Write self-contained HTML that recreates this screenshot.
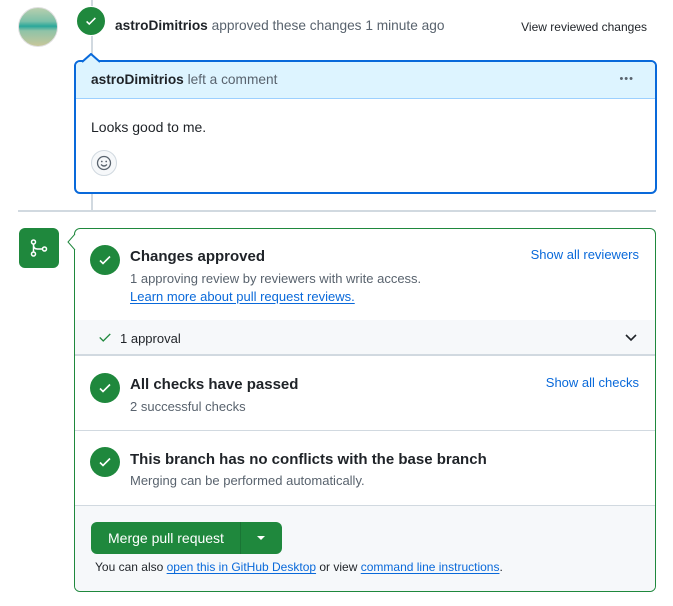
<!DOCTYPE html>
<html><head><meta charset="utf-8"><style>
*{box-sizing:border-box;margin:0;padding:0}
body{width:673px;height:606px;background:#fff;font-family:"Liberation Sans",sans-serif;color:#1f2328;position:relative;overflow:hidden}
.a{position:absolute;white-space:nowrap}
.muted{color:#59636e}
.link{color:#0969da}
.ul{text-decoration:underline;text-underline-offset:2px}
.chk{position:absolute;width:30px;height:30px;border-radius:50%;background:#1f883d}
.chk svg{position:absolute;left:7px;top:7px}
</style></head><body>
<div class="a" style="left:91px;top:0;width:2px;height:211px;background:#d1d9e0"></div>
<div class="a" style="left:18px;top:7px;width:40px;height:40px;border-radius:50%;background:linear-gradient(180deg,#b9cfae 0%,#7cc0a8 35%,#2aa79a 48%,#8fc3a8 60%,#c7c79a 100%);border:1px solid #e0e0e0"></div>
<div class="a" style="left:76px;top:6px;width:30px;height:30px;border-radius:50%;background:#1f883d;border:1px solid #fff"></div>
<svg class="a" style="left:84px;top:14px" width="14" height="14" viewBox="0 0 16 16"><path d="M3 8.5l3 3 7-7" stroke="#fff" stroke-width="1.8" fill="none"/></svg>
<div class="a" style="left:115px;top:18px;font-size:13.7px"><b>astroDimitrios</b> <span class="muted">approved these changes 1 minute ago</span></div>
<div class="a" style="right:26px;top:20px;font-size:12px">View reviewed changes</div>

<div class="a" style="left:74px;top:60px;width:583px;height:134px;border:2px solid #0969da;border-radius:6px;overflow:hidden;background:#fff">
 <div style="height:37px;background:#ddf4ff;border-bottom:1px solid #9cd0ff;padding:10px 0 0 15px;font-size:13.7px"><b>astroDimitrios</b> <span class="muted">left a comment</span></div>
 <div class="a" style="right:21px;top:11px;font-size:11px;color:#59636e;letter-spacing:1px">•••</div>
 <div style="padding:20px 0 0 15px;font-size:14px">Looks good to me.</div>
</div>
<svg class="a" style="left:82px;top:53px" width="18" height="10" viewBox="0 0 18 10"><path d="M0 9L9 1L18 9" fill="#ddf4ff" stroke="#0969da" stroke-width="2"/></svg>
<div class="a" style="left:91px;top:150px;width:26px;height:26px;border-radius:50%;background:#f6f8fa;border:1px solid #d1d9e0"></div>
<svg class="a" style="left:96px;top:155px" width="16" height="16" viewBox="0 0 16 16"><circle cx="8" cy="8" r="6.5" fill="none" stroke="#59636e" stroke-width="1.3"/><circle cx="5.8" cy="6.5" r="0.9" fill="#59636e"/><circle cx="10.2" cy="6.5" r="0.9" fill="#59636e"/><path d="M5 9.5q3 3 6 0" stroke="#59636e" stroke-width="1.3" fill="none"/></svg>

<div class="a" style="left:18px;top:210px;width:638px;height:2px;background:#d1d9e0"></div>

<div class="a" style="left:19px;top:228px;width:40px;height:40px;border-radius:6px;background:#1f883d"></div>
<svg class="a" style="left:29px;top:238px" width="20" height="20" viewBox="0 0 20 20"><circle cx="4.5" cy="4" r="2" fill="none" stroke="#fff" stroke-width="1.5"/><circle cx="4.5" cy="16" r="2" fill="none" stroke="#fff" stroke-width="1.5"/><circle cx="15.5" cy="11" r="2" fill="none" stroke="#fff" stroke-width="1.5"/><path d="M4.5 6v8M4.5 7q0 4 4 4h5" stroke="#fff" stroke-width="1.5" fill="none"/></svg>

<div class="a" style="left:74px;top:228px;width:582px;height:364px;border:1px solid #1f883d;border-radius:6px;overflow:hidden">
 <div class="a" style="left:0;top:91px;width:100%;height:36px;background:#f6f8fa;border-bottom:2px solid #d1d9e0"></div>
 <div class="a" style="left:0;top:201px;width:100%;height:1px;background:#d1d9e0"></div>
 <div class="a" style="left:0;top:276px;width:100%;height:90px;background:#f6f8fa;border-top:1px solid #d1d9e0"></div>
</div>
<svg class="a" style="left:67px;top:234px" width="9" height="16" viewBox="0 0 9 16"><path d="M8 0L1 8L8 16" fill="#fff" stroke="#1f883d" stroke-width="1"/></svg>

<div class="chk" style="left:90px;top:245px"><svg width="16" height="16" viewBox="0 0 16 16"><path d="M3 8.5l3 3 7-7" stroke="#fff" stroke-width="1.6" fill="none"/></svg></div>
<div class="a" style="left:130px;top:248px;font-size:15px;font-weight:bold">Changes approved</div>
<div class="a muted" style="left:130px;top:271px;font-size:13px">1 approving review by reviewers with write access.</div>
<div class="a link ul" style="left:130px;top:289px;font-size:13px">Learn more about pull request reviews.</div>
<div class="a link" style="right:34px;top:247px;font-size:13px">Show all reviewers</div>

<svg class="a" style="left:98px;top:330px" width="14" height="14" viewBox="0 0 16 16"><path d="M2 8.5l4 4 8-8" stroke="#1f883d" stroke-width="1.6" fill="none"/></svg>
<div class="a" style="left:120px;top:331px;font-size:13px">1 approval</div>
<svg class="a" style="left:624px;top:332px" width="14" height="12" viewBox="0 0 14 12"><path d="M2 3l5 5 5-5" stroke="#1f2328" stroke-width="1.6" fill="none"/></svg>

<div class="chk" style="left:90px;top:373px"><svg width="16" height="16" viewBox="0 0 16 16"><path d="M3 8.5l3 3 7-7" stroke="#fff" stroke-width="1.6" fill="none"/></svg></div>
<div class="a" style="left:130px;top:376px;font-size:15px;font-weight:bold">All checks have passed</div>
<div class="a muted" style="left:130px;top:399px;font-size:13px">2 successful checks</div>
<div class="a link" style="right:34px;top:375px;font-size:13px">Show all checks</div>

<div class="chk" style="left:90px;top:447px"><svg width="16" height="16" viewBox="0 0 16 16"><path d="M3 8.5l3 3 7-7" stroke="#fff" stroke-width="1.6" fill="none"/></svg></div>
<div class="a" style="left:130px;top:451px;font-size:15px;font-weight:bold">This branch has no conflicts with the base branch</div>
<div class="a muted" style="left:130px;top:473px;font-size:13px">Merging can be performed automatically.</div>

<div class="a" style="left:91px;top:522px;width:191px;height:32px;border-radius:6px;background:#1f883d"></div>
<div class="a" style="left:240px;top:522px;width:1px;height:32px;background:#1a7535"></div>
<div class="a" style="left:108px;top:530px;font-size:14px;color:#fff">Merge pull request</div>
<svg class="a" style="left:256px;top:536px" width="10" height="6" viewBox="0 0 10 6"><path d="M1 0h8L5 4z" fill="#fff"/></svg>
<div class="a" style="left:95px;top:560px;font-size:12px">You can also <span class="link ul">open this in GitHub Desktop</span> or view <span class="link ul">command line instructions</span>.</div>
</body></html>
